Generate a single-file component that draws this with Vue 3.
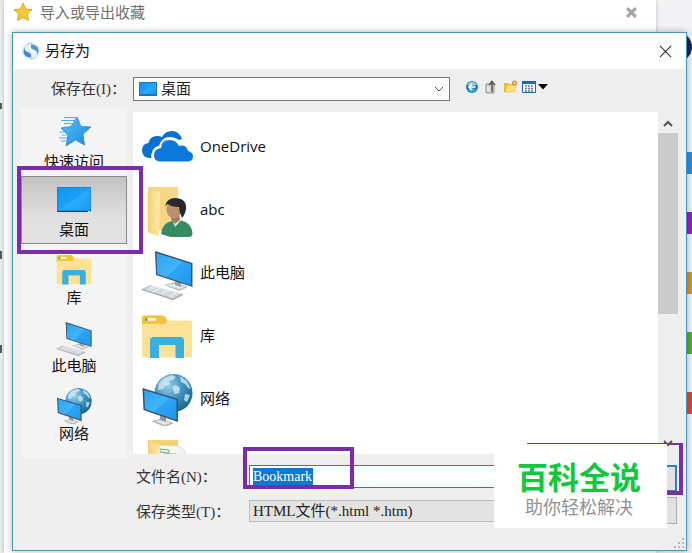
<script setup>
import { ref } from 'vue'

const places = [
  { id: 'quick', label: '快速访问' },
  { id: 'desktop', label: '桌面' },
  { id: 'library', label: '库' },
  { id: 'pc', label: '此电脑' },
  { id: 'network', label: '网络' },
]
const entries = [
  { id: 'onedrive', label: 'OneDrive' },
  { id: 'user', label: 'abc' },
  { id: 'pc', label: '此电脑' },
  { id: 'library', label: '库' },
  { id: 'network', label: '网络' },
  { id: 'docs', label: '' },
]
const edgeTabs = ['blue', 'purple', 'orange', 'green', 'red']
const active = ref('desktop')
const fileName = ref('Bookmark')
</script>

<template>
  <div class="page">
    <svg class="sprites" aria-hidden="true">
      <defs>
        <linearGradient id="screen" x1="0" y1="0" x2="1" y2="1">
          <stop offset="0" stop-color="#2ba3f4" /><stop offset=".5" stop-color="#43b4fb" />
          <stop offset=".52" stop-color="#2ba5f7" /><stop offset="1" stop-color="#2197ee" />
        </linearGradient>
        <linearGradient id="desk" x1="0" y1="0" x2="1" y2="1">
          <stop offset="0" stop-color="#0f94f5" /><stop offset=".5" stop-color="#1a9ffb" />
          <stop offset=".52" stop-color="#2dabff" /><stop offset="1" stop-color="#149bf8" />
        </linearGradient>
        <linearGradient id="flap" x1="0" y1="0" x2="1" y2="0">
          <stop offset="0" stop-color="#f6d276" /><stop offset="1" stop-color="#ffe9ac" />
        </linearGradient>
        <radialGradient id="globe" cx=".35" cy=".3" r=".75">
          <stop offset="0" stop-color="#9bd0ea" /><stop offset=".5" stop-color="#4296c4" />
          <stop offset="1" stop-color="#1d648f" />
        </radialGradient>
        <linearGradient id="starfill" x1="0" y1="0" x2="1" y2="1">
          <stop offset="0" stop-color="#5cc0f7" /><stop offset="1" stop-color="#1489dc" />
        </linearGradient>
      </defs>
      <symbol id="i-pc" viewBox="0 0 52 52">
        <path d="M23 37l11-3 13 5-9 4z" fill="#b9bfc4" />
        <path d="M25 37l8-1 11 3-6 2z" fill="#e6eaec" />
        <path d="M34 30l6 2v7l-6-2z" fill="#9ba3a9" />
        <path d="M14 3l37.500 12v24L15 27z" fill="#3a5264" />
        <path d="M15.500 5L50 16v21.500L16 26z" fill="url(#screen)" />
        <path d="M1 41l8-4 33 9-10 5z" fill="#c3c8cc" />
        <path d="M1 41v1l31 10 10-5v-1l-10 5z" fill="#8d959b" />
        <path d="M5 41l28 8M8 39.500l28 8M10 38l28 8M12 44l7-4M20 46l7-4M28 49l7-4M7 42l6-4" stroke="#f6f7f8" stroke-width=".8" fill="none" />
      </symbol>
      <symbol id="i-network" viewBox="0 0 52 52">
        <circle cx="32.500" cy="19" r="19" fill="url(#globe)" />
        <path d="M18 9l5-5 8-3 4 2-3 3-4 1 1 3-5 2-2 3-5 1zM39 2l7 5 4 8-3-1-3-4-4-2zM44 20l5 1-3 7-3-2zM31 13l4-2 4 3-1 5-4 1z" fill="#d9edf5" opacity=".75" />
        <path d="M10 47l10-2 13 4-9 4z" fill="#abb3b9" />
        <path d="M13 47l8-1 9 3-6 2z" fill="#e4e8eb" />
        <path d="M19 40l6 2v6l-6-2z" fill="#8e999f" />
        <path d="M1.500 14L37 25v23L2.500 36z" fill="#365469" />
        <path d="M3 16l32.500 10v20L4 35z" fill="url(#screen)" />
      </symbol>
      <symbol id="i-library" viewBox="0 0 52 52">
        <path d="M1 7q0-2.500 2.500-2.500H21q2 0 3 1.500l2.500 3.500H49q2 0 2 2V45q0 1.500-1.500 1.500h-47Q1 46.500 1 45z" fill="#fde197" />
        <path d="M1 7q0-2.500 2.500-2.500H21q2 0 3 1.500l2.500 3.500-3 3.500H1z" fill="#f3c43b" />
        <path d="M7 8.500h8" stroke="#fff" stroke-width="2.500" />
        <path d="M4 8.500h2" stroke="#4fa694" stroke-width="2.500" />
        <path d="M9 47V29.500Q9 26 12.500 26h27q3.500 0 3.500 3.500V47h-8.500V34H18v13z" fill="#38afdc" />
      </symbol>
      <symbol id="i-onedrive" viewBox="0 0 52 52">
        <path d="M11 36H8q-7-1-7-8 0-6 6.500-7Q9 14 16 14q3 0 5 1 3-6 10-6 7 0 10 8l-3 1q-11-6-17 5-9 1-10 8-1 3 0 5z" fill="#0a6fd0" />
        <path d="M19 39.500q-6-.5-6-6.500 0-6 7-7 2-8 9-8 6 0 9 6 7-2 9 5 5 1 5 5.500 0 4.500-5 5z" fill="#0b79dc" />
        <path d="M11.500 37q-2-9 7-12Q21 16 29 16q7 0 10 6" stroke="#fff" stroke-width="1.800" fill="none" />
      </symbol>
      <symbol id="i-user" viewBox="0 0 52 52">
        <path d="M7 2h30v44H18z" fill="#f5d683" />
        <path d="M7 2l12 5-1 45-11-5z" fill="url(#flap)" />
        <path d="M20 49q1-11 11-13l7-1q13 2 13.500 14 0 3-5 3.500-12 1.500-22-2z" fill="#378a62" />
        <path d="M31 34l3 8 7-8-3-4h-6z" fill="#e9eee8" />
        <path d="M31 28l7 1 1 6-5 4-4-5z" fill="#a57a5d" />
        <ellipse cx="33" cy="24" rx="7.500" ry="9.500" fill="#bb9070" />
        <path d="M24 22q1-9 11-9 11 1 10 11-1 6-4 9-3-6-3-11-8 0-11-3-2 0-3 3z" fill="#2a2829" />
      </symbol>
      <symbol id="i-docs" viewBox="0 0 52 52">
        <path d="M7 3h30v47H7z" fill="#f5d170" />
        <path d="M14 8l24 1 6 5v38H14z" fill="#f5f6f2" stroke="#d9dcd4" />
        <path d="M19 12l9 1v3l-9-1zM23 17h12" stroke="#75a982" fill="none" />
        <path d="M7 3l12 6v43H7z" fill="url(#flap)" />
      </symbol>
      <symbol id="i-desktop" viewBox="0 0 36 36">
        <path d="M1 3h34v25H1z" fill="#1c6fae" />
        <path d="M1.500 3.500h33v23h-33z" fill="url(#desk)" />
        <path d="M1 27.500h30" stroke="#17466c" /><path d="M32 27.500h2" stroke="#e2f2fb" />
      </symbol>
      <symbol id="i-quick" viewBox="0 0 36 36">
        <path d="M21 1l4 9.500 10 .5-8 7 1.500 11-9-5-9.500 6 2-11-7-7 10-1.500z" fill="url(#starfill)" stroke="#1c7fc4" stroke-width=".7" />
        <path d="M8 1.500h13M5 4.500h15M8 7.500h11M4 16h5M6 19h6M3 22h8M5 25h6" stroke="#56aee3" stroke-width="1" />
      </symbol>
    </svg>

    <div class="strip-left"><i></i><i></i><i></i></div>
    <section class="panel">
      <header class="panel-head">
        <svg class="fav" viewBox="0 0 20 20"><path d="M10 1l2.700 6 6.300.7-4.700 4.400 1.300 6.500L10 15.400l-5.600 3.200 1.300-6.500L1 7.700 7.300 7z" fill="#f2c935" stroke="#d8a928" /></svg>
        <h1>导入或导出收藏</h1>
        <button class="panel-close" aria-label="关闭">
          <svg viewBox="0 0 12 12"><path d="M2 2l8 8M10 2l-8 8" stroke="#a5a5a5" stroke-width="3" /></svg>
        </button>
      </header>
    </section>
    <aside class="edge">
      <span class="avatar"></span>
      <span v-for="c in edgeTabs" :key="c" class="tab" :class="c"></span>
    </aside>

    <section class="dialog" role="dialog" aria-label="另存为">
      <header class="title">
        <svg class="logo" viewBox="0 0 18 18">
          <circle cx="9" cy="9" r="9" fill="#e4eef8" />
          <path d="M11 1.500Q3 1 2.500 6q0 3 4 4.500 3.500 1 2.500 5-6 0-7.500-5Q1 3 8 1z" fill="#3c87d0" />
          <path d="M7 16.500q8 .5 8.500-4.500 0-3-4-4.500Q8 6.500 9 2.500q6 0 7.500 5Q17 15 10 17z" fill="#4b94d8" />
          <path d="M9 2.500Q5 6 10 8.500q4 2 1 6.500" fill="none" stroke="#f2f8fd" stroke-width="1.300" />
        </svg>
        <h2>另存为</h2>
        <button class="close" aria-label="关闭">
          <svg viewBox="0 0 14 14"><path d="M1 1l12 12M13 1L1 13" stroke="#333" stroke-width="1.200" /></svg>
        </button>
      </header>

      <div class="lookin">
        <label for="look">保存在(I)：</label>
        <div class="combo">
          <svg class="combo-icon" viewBox="0 0 18 14"><path d="M0 0h18v14H0z" fill="#1b75b8" /><path d="M1 1h16v11H1z" fill="url(#desk)" /></svg>
          <select id="look"><option>桌面</option></select>
          <svg class="chev" viewBox="0 0 10 6"><path d="M1 1l4 4 4-4" fill="none" stroke="#555" /></svg>
        </div>
        <nav class="tools">
          <button aria-label="后退">
            <svg viewBox="0 0 14 14"><circle cx="7" cy="7" r="6" fill="#2379b5" /><path d="M2 4.500Q7-1 12 4.500 7 7 2 4.500z" fill="#a5c8de" /><path d="M2.500 10q4.500 4 9 0L7 8z" fill="#33b1d2" /><path d="M10.500 7H4M7 4L4 7l3 3" stroke="#fff" stroke-width="1.600" fill="none" /></svg>
          </button>
          <button aria-label="向上">
            <svg viewBox="0 0 14 14"><path d="M2 4h3l1 1h4v8H2z" fill="#d7d7d3" stroke="#92928f" /><path d="M8 12V3M5 5l3-3.500L11 5" fill="none" stroke="#555" stroke-width="1.500" /><path d="M4 7v4" stroke="#fff" /></svg>
          </button>
          <button aria-label="新建文件夹">
            <svg viewBox="0 0 14 14"><path d="M1 3h4l1 1h5v8H1z" fill="#e8b93e" /><path d="M2 12l2-7h9l-2 7z" fill="#fbe277" stroke="#dcae36" stroke-width=".6" /><circle cx="11.500" cy="3" r="2" fill="#fbd1a1" stroke="#e9672b" /></svg>
          </button>
          <button class="view" aria-label="视图">
            <svg viewBox="0 0 14 14"><path d="M.5 1.500h13v11H.5z" fill="#fff" stroke="#1b62b1" /><path d="M0 1h14v3H0z" fill="#1b68be" /><path d="M3 6h2M6 6h2M9 6h2M3 8.500h2M6 8.500h2M9 8.500h2M3 11h2M6 11h2M9 11h2" stroke="#467da7" stroke-width="1.300" /></svg>
            <svg class="drop" viewBox="0 0 10 6"><path d="M0 0h10L5 5.500z" fill="#000" /></svg>
          </button>
        </nav>
      </div>

      <div class="main">
        <nav class="places">
          <div v-for="p in places" :key="p.id" class="slot">
            <button class="place" :class="{ on: active === p.id }" @click="active = p.id">
              <svg><use :href="'#i-' + p.id" /></svg>
              <span>{{ p.label }}</span>
            </button>
            <i v-if="p.id === 'desktop'" class="mark mark-place"></i>
          </div>
        </nav>
        <div class="files">
          <ul>
            <li v-for="e in entries" :key="e.id">
              <svg><use :href="'#i-' + e.id" /></svg>
              <span>{{ e.label }}</span>
            </li>
          </ul>
          <div class="scroll">
            <svg viewBox="0 0 10 8"><path d="M1 6l4-4 4 4" fill="none" stroke="#555" stroke-width="2" /></svg>
            <div class="track"><div class="thumb"></div></div>
            <svg viewBox="0 0 10 8"><path d="M1 2l4 4 4-4" fill="none" stroke="#555" stroke-width="2" /></svg>
          </div>
        </div>
      </div>

      <form class="footer" @submit.prevent>
        <div class="fields">
          <label for="fname">文件名(N)：</label>
          <div class="name-box">
            <input id="fname" v-model="fileName" type="text" />
            <i class="mark mark-name"></i>
          </div>
          <label for="ftype">保存类型(T)：</label>
          <select id="ftype"><option>HTML文件(*.html *.htm)</option></select>
        </div>
        <div class="actions">
          <button class="save" aria-label="保存"></button>
          <button type="button" class="cancel" aria-label="取消"></button>
          <i class="mark mark-save"></i>
        </div>
      </form>
      <svg class="grip" viewBox="0 0 11 11"><path d="M8 0h2v2H8zM4 4h2v2H4zM8 4h2v2H8zM0 8h2v2H0zM4 8h2v2H4zM8 8h2v2H8z" fill="#b8b8b8" /></svg>
      <div class="watermark">
        <strong>百科全说</strong>
        <span>助你轻松解决</span>
      </div>
    </section>
  </div>
</template>

<style>
body { margin: 0; }
</style>

<style scoped>
* { box-sizing: border-box; }
.page {
  position: relative;
  display: flex;
  height: 100vh;
  overflow: hidden;
  background: #f3f3f6;
  font-family: "Open Sans", "Noto Sans CJK SC", sans-serif;
  font-size: 15px;
  color: #111;
}
.sprites { position: absolute; width: 0; height: 0; }
h1, h2, ul { margin: 0; padding: 0; font-weight: 400; }
button { padding: 0; border: 0; background: none; font: inherit; color: inherit; }
svg { display: block; flex: none; overflow: visible; }

.strip-left { width: 4px; padding-top: 103px; background: #eeebee; }
.strip-left i { display: block; width: 2px; height: 6px; margin-bottom: 142px; background: #57505c; }
.strip-left i + i { height: 8px; margin-bottom: 86px; }
.panel { flex: 1; background: #fff; box-shadow: 0 0 4px #bbb; }
.panel-head { display: flex; align-items: center; height: 24px; padding: 0 18px 0 9px; }
.fav { width: 20px; height: 20px; }
.panel-head h1 { flex: 1; margin-left: 7px; font-size: 15px; line-height: 22px; color: #707070; }
.panel-close svg { width: 13px; height: 13px; }
.edge { display: flex; flex-direction: column; align-items: flex-end; width: 36px; padding-top: 32px; }
.avatar { width: 30px; height: 30px; margin-bottom: 90px; border-radius: 50%; background: #1c2351; }
.tab { width: 8px; height: 22px; margin-bottom: 38px; }
.blue { background: #2f8de4; }
.purple { background: #a01cc0; }
.orange { background: #df9420; }
.green { background: #5bad22; }
.red { background: #e3492f; }

.dialog {
  position: absolute;
  inset: 32px 5px 2px 12px;
  display: flex;
  flex-direction: column;
  border: 1px solid #4596bd;
  background: #efefef;
  box-shadow: 0 0 7px rgba(0, 0, 0, .3);
}
.title { display: flex; align-items: center; height: 36px; padding: 0 14px 0 9px; background: #fff; }
.logo { width: 18px; height: 18px; }
.title h2 { flex: 1; margin-left: 5px; padding-bottom: 2px; font-size: 15px; line-height: 34px; }
.close svg { width: 13px; height: 13px; }

.lookin, .footer { font-family: "Liberation Serif", "Noto Sans CJK SC", serif; color: #333; }
.lookin { display: flex; align-items: center; height: 39px; }
.lookin label { width: 120px; padding: 0 0 2px 38px; white-space: nowrap; }
.combo { position: relative; flex: 0 1 317px; }
select, input { display: block; width: 100%; margin: 0; border-radius: 0; appearance: none; font: inherit; color: #222; outline: 0; }
.combo select { height: 24px; padding: 0 27px; border: 1px solid #777; background: #fff; }
.combo-icon { position: absolute; left: 6px; top: 5px; width: 18px; height: 14px; }
.chev { position: absolute; right: 6px; top: 9px; width: 10px; height: 6px; }
.tools { display: flex; align-items: center; gap: 5px; margin: 0 0 4px 15px; }
.tools svg { width: 14px; height: 14px; }
.tools .view { display: flex; align-items: center; gap: 2px; }
.tools .drop { width: 10px; height: 6px; }

.main { display: flex; flex: 1; gap: 6px; min-height: 0; padding: 0 8px; }
.places { flex: 0 0 106px; background: #f4f4f4; }
.slot { position: relative; height: 68px; }
.place { display: flex; flex-direction: column; align-items: center; width: 100%; height: 68px; padding-top: 8px; }
.place svg { width: 36px; height: 36px; }
.place span { line-height: 18px; }
.place.on { border: 1px solid #8a8a8a; padding-top: 7px; background: linear-gradient(#c2c2c2, #e0e0e0 60%, #e2e2e2); }
.mark { position: absolute; border: 4px solid #7a2da8; pointer-events: none; }
.mark-place { z-index: 1; inset: -10px -16px -10px -4px; }
.files { display: flex; flex: 1; min-width: 0; margin: 4px 0; background: #fff; }
.files ul { flex: 1; padding: 4px 8px 0; overflow: hidden; list-style: none; }
.files li { display: flex; align-items: center; gap: 7px; height: 63px; }
.files li svg { width: 52px; height: 52px; }
.files li span { padding-bottom: 4px; }
.scroll { display: flex; flex-direction: column; align-items: center; width: 20px; padding: 8px 0 7px; background: #efefef; }
.scroll svg { width: 10px; height: 8px; }
.track { flex: 1; width: 100%; padding: 5px 0; }
.thumb { height: 60%; min-height: 30px; background: #cbcbcb; }

.footer { display: flex; gap: 6px; height: 92px; padding: 7px 9px 0 123px; }
.fields { display: grid; flex: 1; grid-template-columns: 107px 1fr; grid-auto-rows: 23px; gap: 12px 6px; }
.fields label { line-height: 25px; white-space: nowrap; }
.fields select { height: 22px; padding: 0 3px; border: 1px solid #bdbdbd; background: #e3e3e3; }
.name-box { position: relative; }
.name-box input {
  height: 23px;
  padding: 0 3px;
  border: 1px solid #1a7ed2;
  color: #fff;
  font-size: 14px;
  background: linear-gradient(#1177d0, #1177d0) 3px 2px / 60px 17px no-repeat #fff;
}
.mark-name { left: -6px; top: -18px; width: 111px; height: 42px; }
.actions { position: relative; display: flex; flex-direction: column; gap: 5px; width: 88px; }
.actions button { height: 27px; border: 1px solid #adadad; background: #e1e1e1; }
.actions .save { border: 2px solid #2a7fc5; }
.mark-save { right: -6px; top: -22px; width: 156px; height: 52px; border-top-width: 2px; }
.grip { position: absolute; right: 1px; bottom: 1px; width: 11px; height: 11px; }
.watermark {
  position: absolute;
  right: 19px;
  bottom: 22px;
  display: flex;
  flex-direction: column;
  align-items: center;
  width: 173px;
  height: 84px;
  padding: 17px 3px 0 0;
  background: #fff;
  font-family: "Liberation Sans", "Noto Sans CJK SC", sans-serif;
}
.watermark strong { font-size: 31px; line-height: 36px; color: #11c73e; }
.watermark span { font-size: 18px; line-height: 22px; color: #929292; }
</style>
